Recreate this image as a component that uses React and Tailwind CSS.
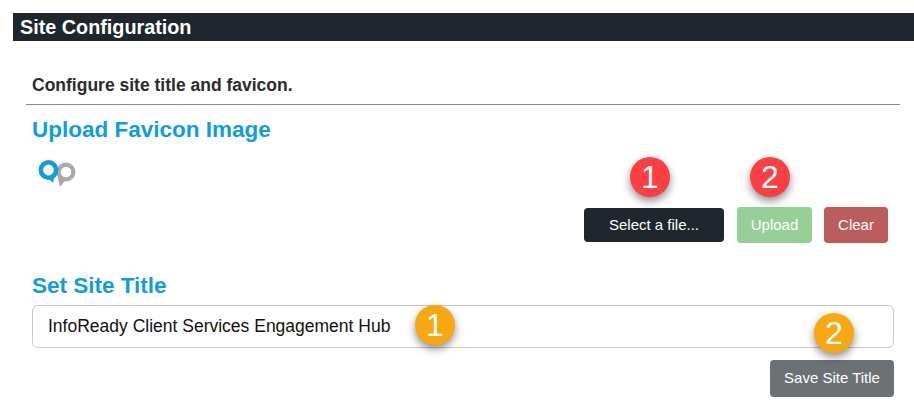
const font = { fontFamily: '"Liberation Sans", Arial, sans-serif' };

function Badge({ n, className }) {
  return (
    <div
      className={`absolute w-10 h-10 rounded-full flex items-center justify-center text-white text-[32px] leading-none shadow-[0_4px_8px_rgba(0,0,0,0.45)] ${className}`}
    >
      {n}
    </div>
  );
}

function Logo() {
  return (
    <svg width="40" height="32" viewBox="0 0 40 32" className="block">
      <circle cx="29" cy="14" r="7.4" fill="none" stroke="#a9abad" strokeWidth="4.2" />
      <path d="M20.5 19 L23 29 L29 21.5 Z" fill="#a9abad" />
      <circle cx="11.5" cy="12" r="7.7" fill="none" stroke="#0f9ddf" strokeWidth="4.6" />
      <path d="M10 19 L16 25 L18 15 Z" fill="#0f9ddf" />
    </svg>
  );
}

export default function App() {
  return (
    <div className="relative w-[914px] h-[420px] bg-white overflow-hidden pt-[13px] pl-[13px]" style={font}>
      <div className="h-[28px] bg-[#1f262d] text-white font-bold text-[19.8px] leading-[28px] pl-[7px]">
        Site Configuration
      </div>
      <div className="pl-[13px] w-[887px]">
        <div className="h-[64px] border-b border-[#8a8a8a] pl-[6px] pt-[33px] text-[17.5px] leading-[22px] font-bold text-[#2b2b2b]">
          Configure site title and favicon.
        </div>
        <div className="pl-[6px]">
          <h2 className="mt-[11px] text-[22.5px] leading-[28px] font-bold text-[#0f9ddf]">Upload Favicon Image</h2>
          <div className="mt-[14px] ml-[5px]"><Logo /></div>
          <div className="mt-[17px] flex justify-end items-center pr-[12px] h-[36px] text-white text-[15px]">
            <div className="w-[140px] h-[34px] rounded bg-[#1f262d] flex items-center justify-center">Select a file...</div>
            <div className="ml-[13px] w-[75px] h-[36px] rounded bg-[#96d096] flex items-center justify-center">Upload</div>
            <div className="ml-[12px] w-[64px] h-[36px] rounded bg-[#bc5d5d] flex items-center justify-center">Clear</div>
          </div>
          <h2 className="mt-[29px] text-[22.5px] leading-[28px] font-bold text-[#0f9ddf]">Set Site Title</h2>
          <div className="mt-[5px] w-[862px] h-[43px] border border-[#c9c9c9] rounded-md pl-[15px] flex items-center text-[17.5px] text-[#111111]">
            InfoReady Client Services Engagement Hub
          </div>
          <div className="mt-[12px] w-[862px] flex justify-end">
            <div className="w-[124px] h-[37px] rounded bg-[#6c7176] text-white text-[15px] flex items-center justify-center">Save Site Title</div>
          </div>
        </div>
      </div>
      <Badge n="1" className="left-[630px] top-[157px] bg-[#fb3f43]" />
      <Badge n="2" className="left-[750px] top-[157px] bg-[#fb3f43]" />
      <Badge n="1" className="left-[415px] top-[305px] bg-[#f7a70f]" />
      <Badge n="2" className="left-[814px] top-[313px] bg-[#f7a70f]" />
    </div>
  );
}
